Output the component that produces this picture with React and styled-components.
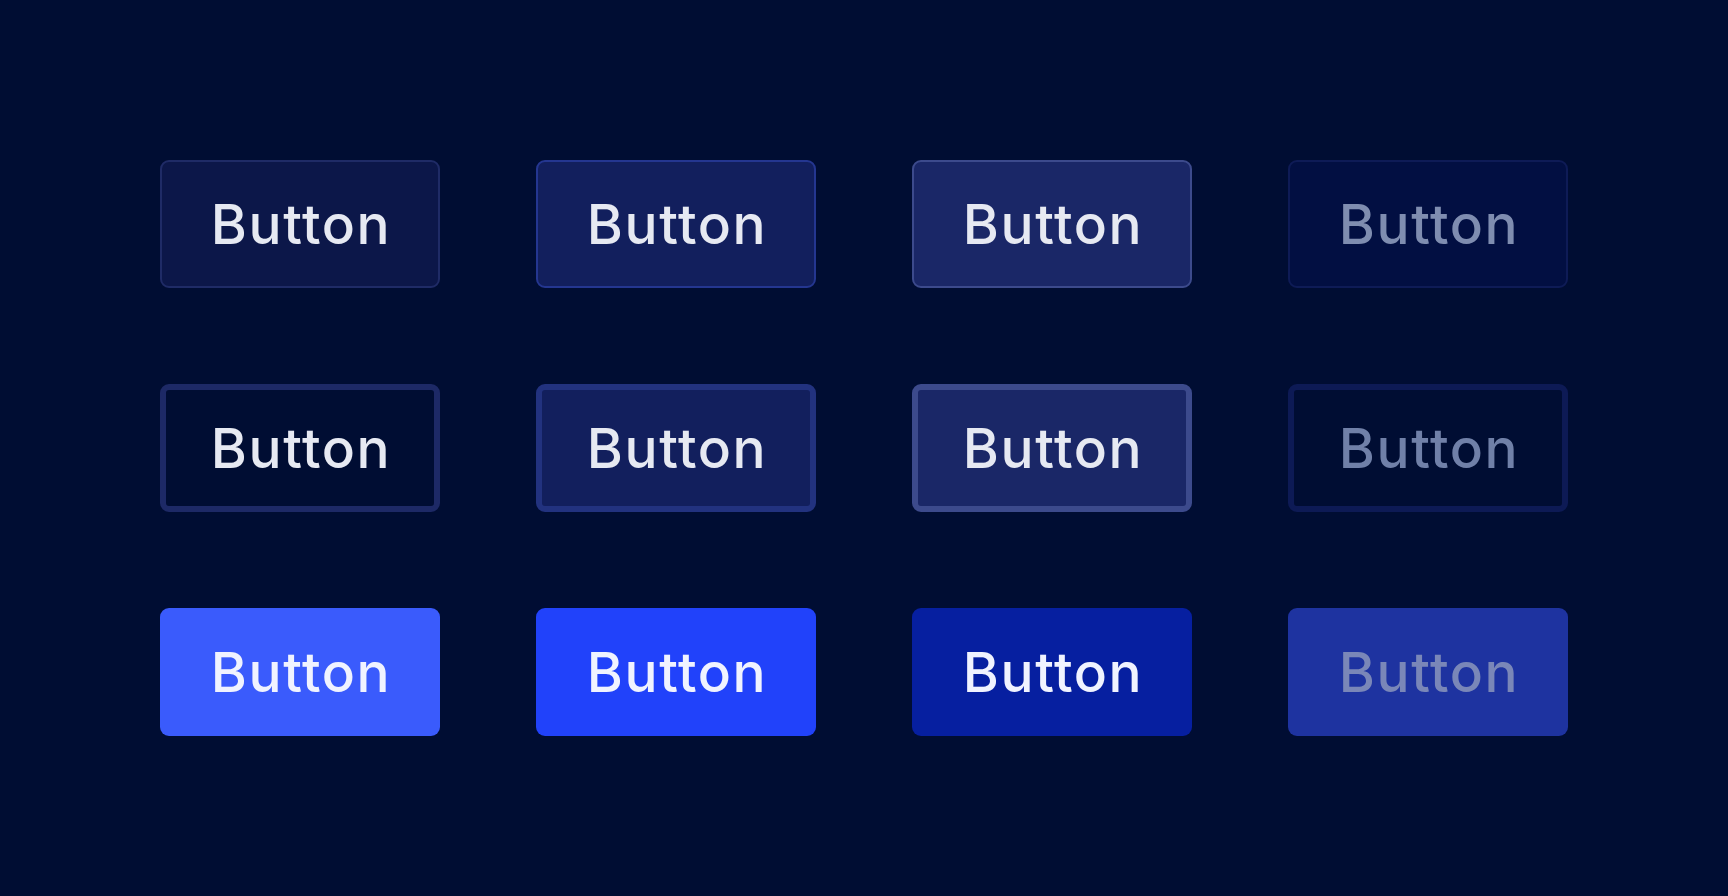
import React from "react";
import styled, { createGlobalStyle, css } from "styled-components";

const Global = createGlobalStyle`
  html, body { margin: 0; padding: 0; background: #000d33; }
  body { font-family: Inter, "Noto Sans", sans-serif; }
`;

const Page = styled.div`
  width: 1728px;
  height: 896px;
  box-sizing: border-box;
  background: #000d33;
  display: flex;
  align-items: center;
  justify-content: center;
`;

const Grid = styled.div`
  display: grid;
  grid-template-columns: repeat(4, 280px);
  grid-auto-rows: 128px;
  column-gap: 96px;
  row-gap: 96px;
`;

const variants = {
  secondary: {
    default: { bg: "#0c1749", border: "#1f2b66", color: "#e6e9f2" },
    hover: { bg: "#121f5d", border: "#243690", color: "#e6e9f2" },
    active: { bg: "#1a2767", border: "#3c4a8c", color: "#e6e9f2" },
    disabled: { bg: "#020f42", border: "#0e1b56", color: "#7f8db0" },
  },
  outline: {
    default: { bg: "#000d33", border: "#1d2966", color: "#e6e9f2" },
    hover: { bg: "#121f5d", border: "#22327f", color: "#e6e9f2" },
    active: { bg: "#1a2767", border: "#3c4a8c", color: "#e6e9f2" },
    disabled: { bg: "#000d33", border: "#0d1a55", color: "#7080a8" },
  },
  primary: {
    default: { bg: "#3a5bfc", border: "#3a5bfc", color: "#f0f3ff" },
    hover: { bg: "#2142fa", border: "#2142fa", color: "#f0f3ff" },
    active: { bg: "#061fa0", border: "#061fa0", color: "#f0f3ff" },
    disabled: { bg: "#1e33a0", border: "#1e33a0", color: "#7a87b8" },
  },
};

const borderWidths = { secondary: 2, outline: 6, primary: 0 };

const Btn = styled.button`
  box-sizing: border-box;
  width: 280px;
  height: 128px;
  border-radius: 9px;
  display: flex;
  align-items: center;
  justify-content: center;
  padding: 0 0 0 2px;
  font-family: Inter, "Noto Sans", sans-serif;
  font-size: 55px;
  font-weight: 500;
  letter-spacing: 1.6px;
  cursor: pointer;
  ${({ $kind, $state }) => {
    const v = variants[$kind][$state];
    const bw = borderWidths[$kind];
    return css`
      background: ${v.bg};
      color: ${v.color};
      border: ${bw}px solid ${v.border};
      ${bw === 0 ? "border: none;" : ""}
    `;
  }}
`;

const rows = ["secondary", "outline", "primary"];
const states = ["default", "hover", "active", "disabled"];

export default function App() {
  return (
    <>
      <Global />
      <Page>
        <Grid>
          {rows.map((k) =>
            states.map((s) => (
              <Btn key={k + s} $kind={k} $state={s}>
                Button
              </Btn>
            ))
          )}
        </Grid>
      </Page>
    </>
  );
}
